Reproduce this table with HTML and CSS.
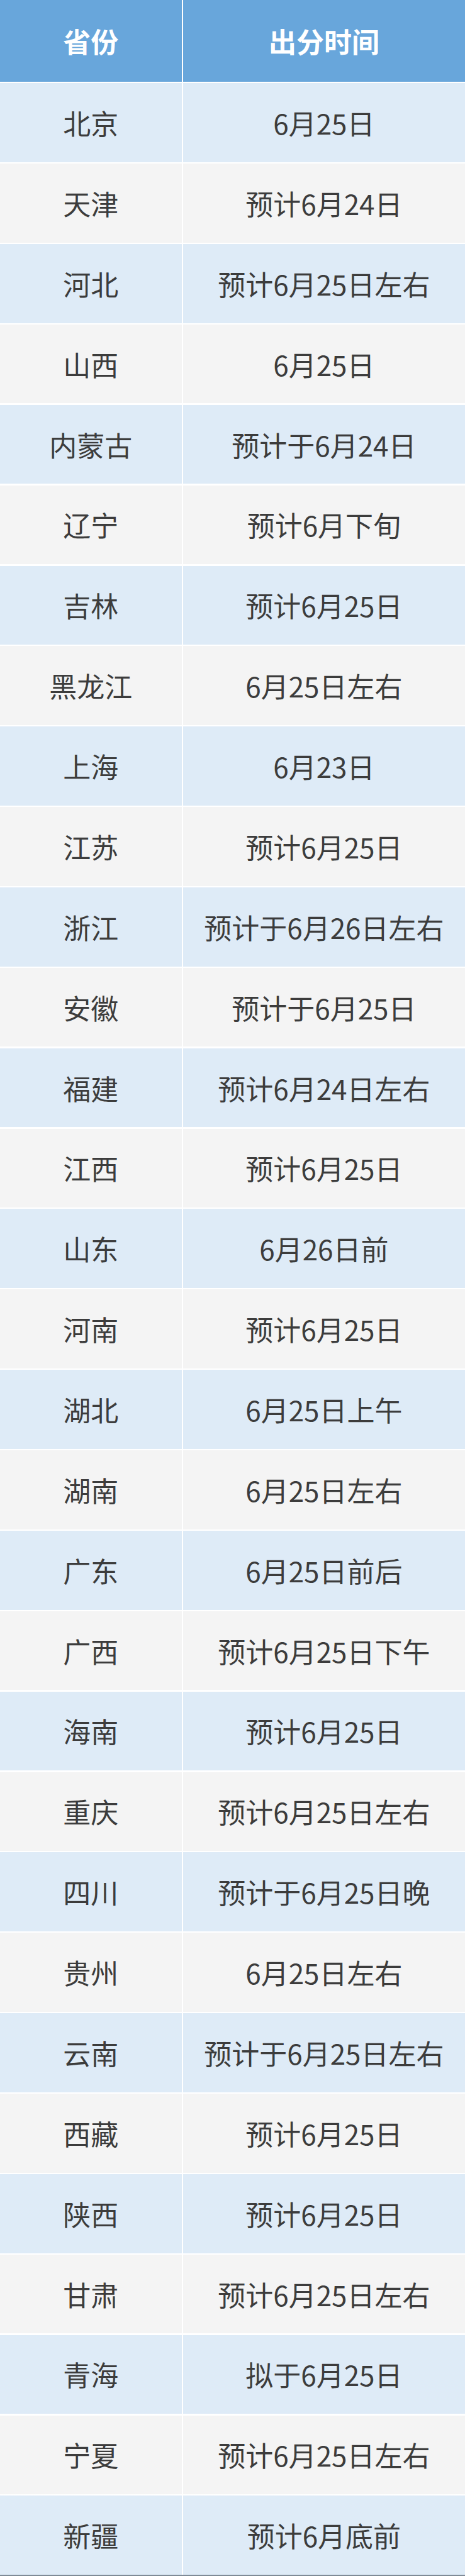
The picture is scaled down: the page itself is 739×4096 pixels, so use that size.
FILE: index.html
```html
<!DOCTYPE html>
<html lang="zh-CN">
<head>
<meta charset="utf-8">
<title>各省份出分时间</title>
<link rel="stylesheet" href="styles.css">
</head>
<body>
<div class="table">
  <div class="cell head">省份</div><div class="cell head">出分时间</div>
  <div class="cell odd">北京</div><div class="cell odd">6月25日</div>
  <div class="cell even">天津</div><div class="cell even">预计6月24日</div>
  <div class="cell odd">河北</div><div class="cell odd">预计6月25日左右</div>
  <div class="cell even">山西</div><div class="cell even">6月25日</div>
  <div class="cell odd">内蒙古</div><div class="cell odd">预计于6月24日</div>
  <div class="cell even">辽宁</div><div class="cell even">预计6月下旬</div>
  <div class="cell odd">吉林</div><div class="cell odd">预计6月25日</div>
  <div class="cell even">黑龙江</div><div class="cell even">6月25日左右</div>
  <div class="cell odd">上海</div><div class="cell odd">6月23日</div>
  <div class="cell even">江苏</div><div class="cell even">预计6月25日</div>
  <div class="cell odd">浙江</div><div class="cell odd">预计于6月26日左右</div>
  <div class="cell even">安徽</div><div class="cell even">预计于6月25日</div>
  <div class="cell odd">福建</div><div class="cell odd">预计6月24日左右</div>
  <div class="cell even">江西</div><div class="cell even">预计6月25日</div>
  <div class="cell odd">山东</div><div class="cell odd">6月26日前</div>
  <div class="cell even">河南</div><div class="cell even">预计6月25日</div>
  <div class="cell odd">湖北</div><div class="cell odd">6月25日上午</div>
  <div class="cell even">湖南</div><div class="cell even">6月25日左右</div>
  <div class="cell odd">广东</div><div class="cell odd">6月25日前后</div>
  <div class="cell even">广西</div><div class="cell even">预计6月25日下午</div>
  <div class="cell odd">海南</div><div class="cell odd">预计6月25日</div>
  <div class="cell even">重庆</div><div class="cell even">预计6月25日左右</div>
  <div class="cell odd">四川</div><div class="cell odd">预计于6月25日晚</div>
  <div class="cell even">贵州</div><div class="cell even">6月25日左右</div>
  <div class="cell odd">云南</div><div class="cell odd">预计于6月25日左右</div>
  <div class="cell even">西藏</div><div class="cell even">预计6月25日</div>
  <div class="cell odd">陕西</div><div class="cell odd">预计6月25日</div>
  <div class="cell even">甘肃</div><div class="cell even">预计6月25日左右</div>
  <div class="cell odd">青海</div><div class="cell odd">拟于6月25日</div>
  <div class="cell even">宁夏</div><div class="cell even">预计6月25日左右</div>
  <div class="cell odd">新疆</div><div class="cell odd">预计6月底前</div>
</div>
</body>
</html>
```
FILE: styles.css
```css
html, body {
  margin: 0;
  padding: 0;
  background: #ffffff;
}
body {
  font-family: "Noto Sans CJK SC", "Noto Sans", sans-serif;
}
.table {
  box-sizing: border-box;
  width: 739px;
  height: 4096px;
  display: grid;
  grid-template-columns: 288.5px 1fr;
  grid-template-rows: 130px repeat(31, 1fr);
  gap: 2.3px;
  background: #ffffff;
  border-bottom: 2px solid #7f8b97;
}
.cell {
  display: flex;
  align-items: center;
  justify-content: center;
  font-size: 44px;
  line-height: 1;
  color: #3c3c3c;
  white-space: nowrap;
}
.head {
  background: #68a6db;
  color: #ffffff;
  font-weight: 700;
}
.odd {
  background: #deebf7;
}
.even {
  background: #f4f4f4;
}
```
